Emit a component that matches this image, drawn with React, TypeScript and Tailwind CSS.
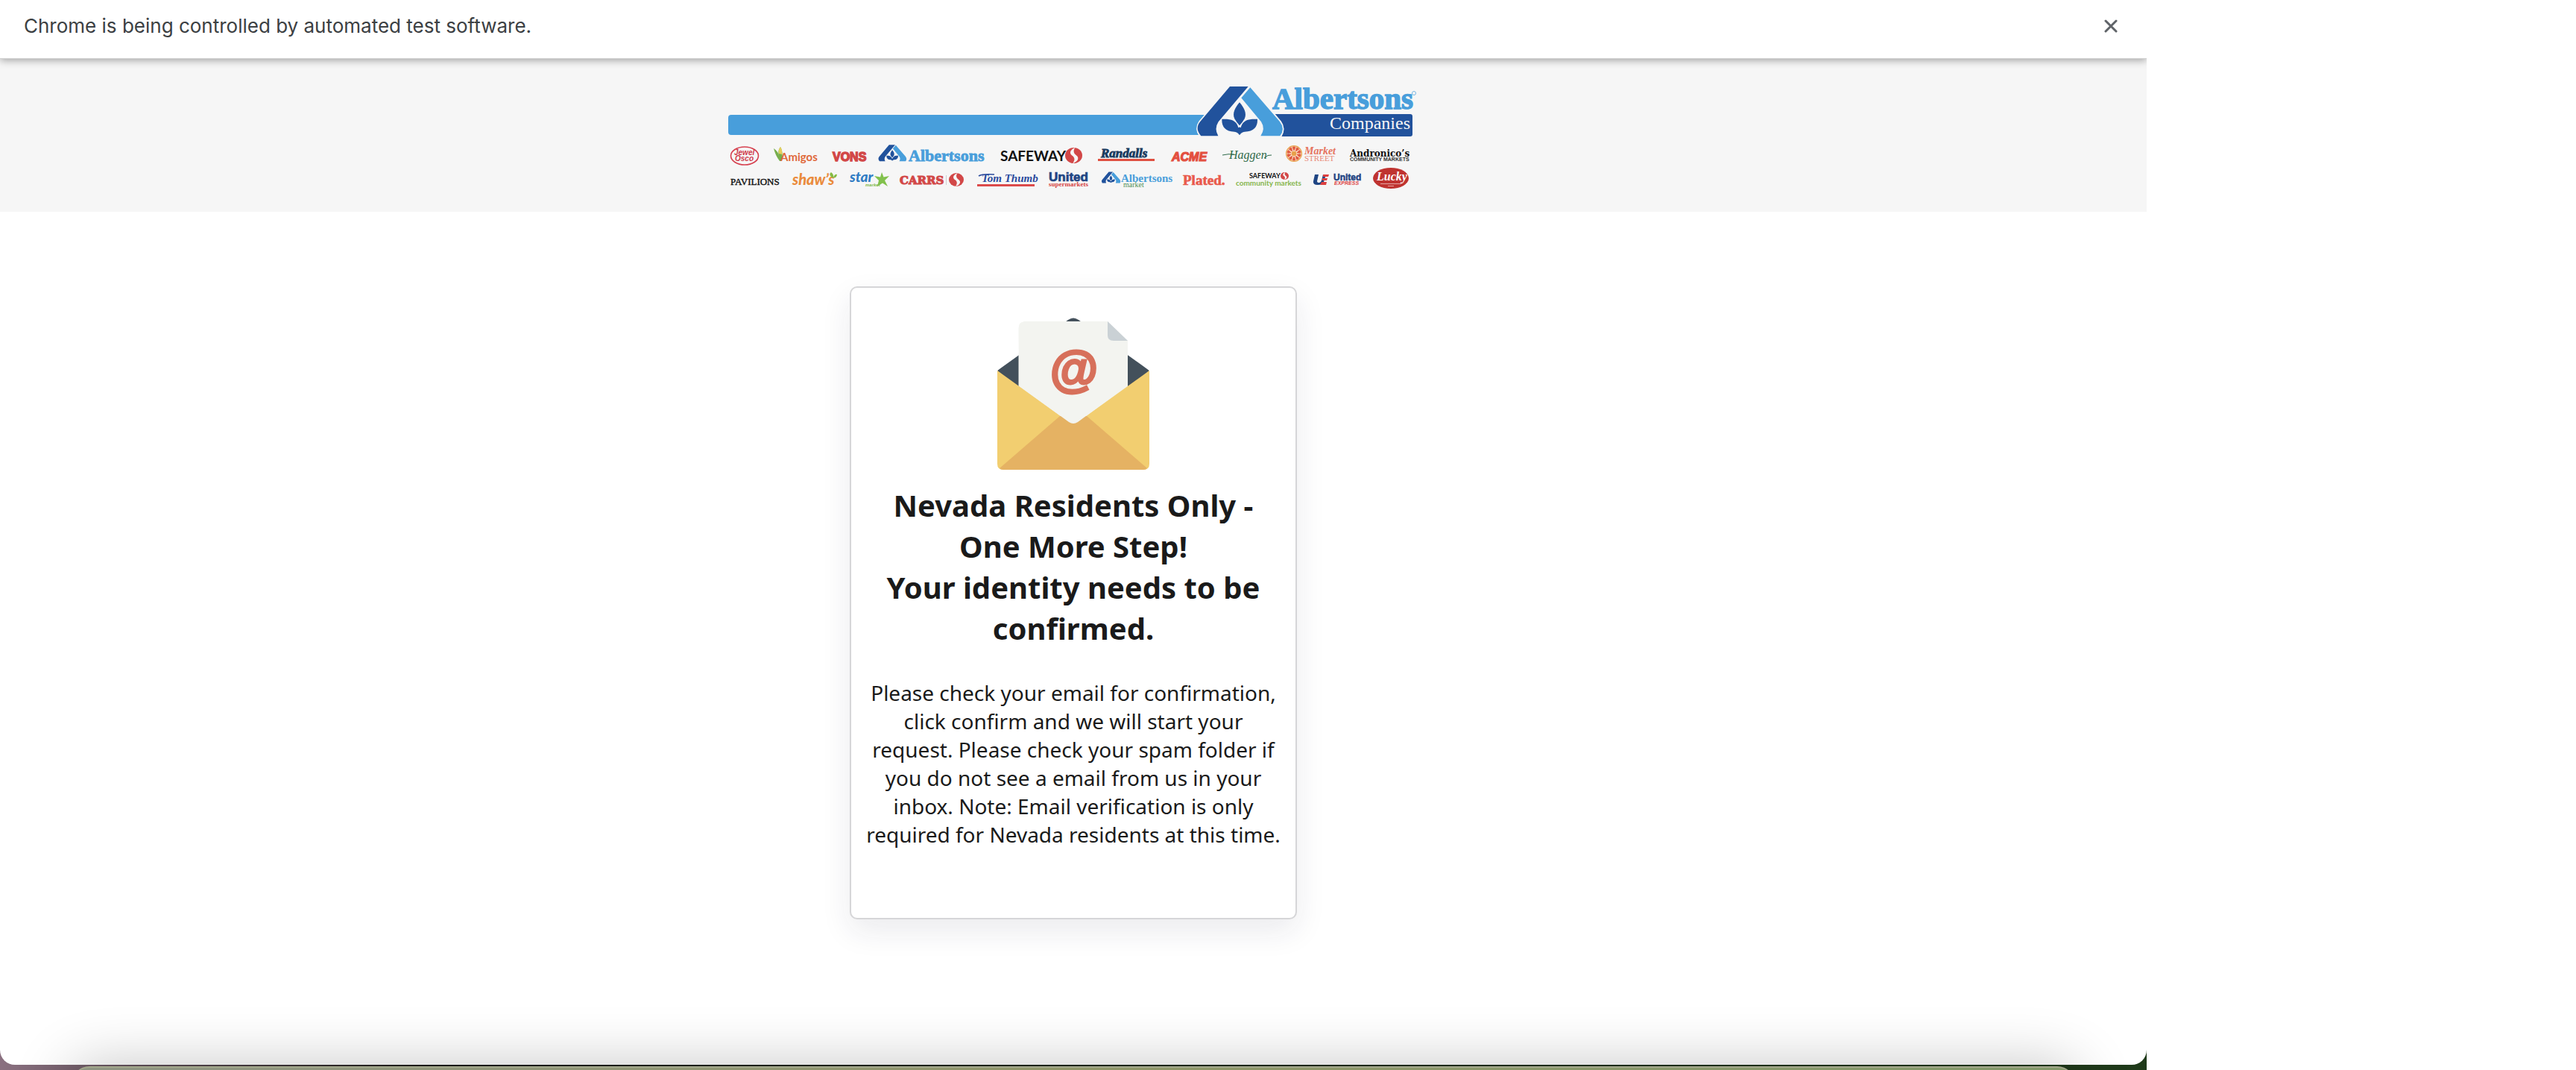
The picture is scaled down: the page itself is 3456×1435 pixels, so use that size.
import React from "react";

function LeafMark({ x, y, scale }: { x: number; y: number; scale: number }) {
  return (
    <g transform={`translate(${x} ${y}) scale(${scale})`}>
      <path d="M180 48H262L382 190Q402 218 384 247H62Q40 218 60 190Z" fill="#f6f6f6" stroke="#f6f6f6" strokeWidth="10" strokeLinejoin="round" />
      <path d="M180 48H254L134 190Q116 218 133 247H64Q38 218 60 190Z" fill="#21529c" />
      <path d="M262 52L380 188Q404 218 382 247H304Q324 218 306 190L226 94Z" fill="#489edb" />
      <path d="M219 112C202 132 188 156 199 178Q208 194 219 205Q230 194 239 178C250 156 236 132 219 112Z" fill="#21529c" />
      <path d="M148 179H168Q208 182 214 214Q219 209 224 214Q230 182 270 179H291Q293 228 240 230Q225 232 219 244Q213 232 198 230Q146 228 148 179Z" fill="#21529c" />
    </g>
  );
}

function SafewayS({ x, y, w, h }: { x: number; y: number; w: number; h: number }) {
  return (
    <svg x={x} y={y} width={w} height={h} viewBox="0 0 100 100" preserveAspectRatio="none">
      <ellipse cx="50" cy="50" rx="50" ry="50" fill="#d24747" />
      <path d="M58 0C30 12 22 36 40 50C58 62 58 82 44 100C72 92 86 66 66 50C48 36 46 18 58 0Z" fill="#f6f6f6" />
    </svg>
  );
}

const sans = "'Liberation Sans', Arial, sans-serif";
const serif = "'Liberation Serif', 'Times New Roman', serif";
const lato = "Lato, sans-serif";
const slab = "'DejaVu Serif', serif";

function BrandBanner() {
  const rays = [0, 36, 72, 108, 144, 180, 216, 252, 288, 324];
  return (
    <svg viewBox="976 112 928 144" className="w-[928px] max-w-full" role="img" aria-label="Albertsons Companies brands">
      <rect x="977" y="154" width="700" height="27" rx="4" fill="#489edb" />
      <rect x="1690" y="153" width="205" height="30" rx="3" fill="#21529c" />
      <LeafMark x={1590} y={100} scale={0.3333} />
      <text x="1707" y="146" fontFamily={serif} fontWeight="700" fontSize="41" fill="#489edb" stroke="#489edb" strokeWidth="1.4">Albertsons</text>
      <circle cx="1897" cy="125" r="2.5" fill="none" stroke="#489edb" strokeWidth="0.7" />
      <text x="1784" y="173" fontFamily={serif} fontSize="24" fill="#f6f6f6">Companies</text>

      <ellipse cx="999" cy="209" rx="18.5" ry="12" fill="none" stroke="#d6404f" strokeWidth="1.6" />
      <g fontFamily={sans} fontWeight="700" fontStyle="italic" fontSize="10" fill="#cf3a4a">
        <text x="985" y="208">Jewel</text>
        <text x="986" y="216">Osco</text>
      </g>

      <path d="M1046 216Q1040 208 1038 199Q1044 203 1045 209Q1043 202 1047 197Q1051 203 1049 216Z" fill="#78ae4c" />
      <path d="M1045 206Q1044 200 1047 197Q1050 201 1049 207Z" fill="#e6cf5c" />
      <text x="1047" y="216" fontFamily={lato} fontWeight="700" fontSize="15" fill="#e0683a">Amigos</text>
      <text x="1117" y="216" fontFamily={sans} fontWeight="700" fontSize="16" fill="#d24747" stroke="#d24747" strokeWidth="1.4">VONS</text>
      <LeafMark x={1173} y={189} scale={0.11} />
      <text x="1219" y="216" fontFamily={serif} fontWeight="700" fontSize="22" fill="#489edb" stroke="#489edb" strokeWidth="0.8">Albertsons</text>
      <text x="1342" y="216" fontFamily={lato} fontWeight="700" fontSize="19" fill="#111">SAFEWAY</text>
      <SafewayS x={1429} y={198} w={23} h={21} />
      <text x="1477" y="211" fontFamily={serif} fontWeight="700" fontStyle="italic" fontSize="17" fill="#183a5e" stroke="#183a5e" strokeWidth="0.8">Randalls</text>
      <rect x="1473" y="213" width="76" height="3" fill="#df4f40" />
      <text x="1572" y="216" fontFamily={sans} fontWeight="700" fontStyle="italic" fontSize="16" fill="#e34f3f" stroke="#e34f3f" strokeWidth="1.2">ACME</text>
      <text x="1649" y="213" fontFamily={serif} fontStyle="italic" fontSize="16" fill="#2f6a49">Haggen</text>
      <path d="M1640 208Q1648 206 1656 207M1696 212Q1701 207 1706 208" fill="none" stroke="#2f6a49" strokeWidth="1" />

      <circle cx="1736" cy="206" r="10.4" fill="#fbe6cc" stroke="#e8a04a" strokeWidth="1.2" />
      {rays.map((a) => (
        <path key={a} d="M1736 202L1734 197.500Q1736 196 1738 197.500Z" transform={`rotate(${a} 1736 206)`} fill="#e0593f" stroke="#e0593f" strokeWidth="0.8" />
      ))}
      <circle cx="1736" cy="206" r="3.2" fill="#e8a04a" />
      <text x="1750" y="207" fontFamily={serif} fontWeight="700" fontStyle="italic" fontSize="14" fill="#e5735f">Market</text>
      <text x="1750" y="216" fontFamily={serif} fontSize="11" fill="#e98a78">STREET</text>
      <text x="1811" y="210" fontFamily={slab} fontWeight="700" fontSize="12" fill="#111">Andronico’s</text>
      <text x="1811" y="216" fontFamily={sans} fontWeight="700" fontSize="7" fill="#333">COMMUNITY MARKETS</text>

      <text x="980" y="248" fontFamily={serif} fontSize="13" fill="#111" stroke="#111" strokeWidth="0.4">PAVILIONS</text>
      <text x="1063" y="248" fontFamily={lato} fontWeight="900" fontStyle="italic" fontSize="20" fill="#ea8b3d">shaw’s</text>
      <path d="M1116 238Q1111 234 1115 231Q1119 234 1118 238Q1120 233 1123 234Q1122 240 1116 238Z" fill="#86bb45" />
      <text x="1140" y="244" fontFamily={lato} fontWeight="900" fontStyle="italic" fontSize="19" fill="#2f7cc4">star</text>
      <path d="M1183 231L1185.500 237.500L1193 236L1187 242L1191 250L1184 245.500L1177 250L1179 242L1173 236L1181 237.500Z" fill="#82c14c" />
      <text x="1161" y="250" fontFamily={sans} fontWeight="700" fontStyle="italic" fontSize="6" fill="#82b94c">market</text>
      <text x="1207" y="247" fontFamily={slab} fontWeight="700" fontSize="15" fill="#d24747" stroke="#d24747" strokeWidth="1">CARRS</text>
      <rect x="1269" y="235" width="1" height="13" fill="#cfcfcf" />
      <SafewayS x={1273} y={232} w={20} h={18} />
      <text x="1317" y="244" fontFamily={serif} fontWeight="700" fontStyle="italic" fontSize="15" fill="#2a4a9d">Tom Thumb</text>
      <path d="M1313 236Q1318 233 1334 234" fill="none" stroke="#2a4a9d" strokeWidth="1.6" />
      <rect x="1311" y="247" width="77" height="3" fill="#dc4b4b" />
      <text x="1407" y="243" fontFamily={sans} fontWeight="700" fontSize="17" fill="#1f4583" stroke="#1f4583" strokeWidth="0.7">United</text>
      <text x="1407" y="250" fontFamily={serif} fontWeight="700" fontSize="9" fill="#d64545">supermarkets</text>
      <LeafMark x={1474} y={227} scale={0.075} />
      <text x="1504" y="244" fontFamily={serif} fontWeight="700" fontSize="15" fill="#489edb">Albertsons</text>
      <text x="1507" y="251" fontFamily={serif} fontSize="10" fill="#4f8f55">market</text>
      <text x="1587" y="248" fontFamily={serif} fontWeight="700" fontSize="19" fill="#e9594c" stroke="#e9594c" strokeWidth="0.6">Plated.</text>
      <text x="1676" y="239" fontFamily={lato} fontWeight="700" fontSize="9" fill="#111">SAFEWAY</text>
      <SafewayS x={1718} y={231} w={11} h={10} />
      <text x="1658" y="249" fontFamily={lato} fontWeight="700" fontSize="10" fill="#86b54d">community markets</text>
      <path d="M1764 234H1769L1767 243Q1767 245 1770 245Q1772 245 1773 242L1775 234H1779L1776 244Q1774 248 1768 248Q1761 248 1762 243Z" fill="#1f4583" />
      <path d="M1775 234H1783L1782 237H1775ZM1774 239H1781L1780 242H1774ZM1773 244H1780L1779 248H1771Z" fill="#dc4040" />
      <text x="1789" y="242" fontFamily={sans} fontWeight="700" fontSize="12" fill="#1f4583" stroke="#1f4583" strokeWidth="0.5">United</text>
      <text x="1790" y="248" fontFamily={sans} fontWeight="700" fontStyle="italic" fontSize="7" fill="#dc4040">EXPRESS</text>
      <ellipse cx="1866" cy="239" rx="24" ry="14" fill="#bf3330" />
      <text x="1847" y="242" fontFamily={serif} fontWeight="700" fontStyle="italic" fontSize="16" fill="#fff">Lucky</text>
      <path d="M1852 246.500H1880M1862 249.500H1870" stroke="#e3a5a2" strokeWidth="1.2" />
    </svg>
  );
}

function EnvelopeIcon() {
  return (
    <svg viewBox="0 0 204 204" className="h-[204px] w-[204px]" aria-hidden="true">
      <path d="M0 71L95 3Q102 -2 109 3L204 71L102 160Z" fill="#43505b" />
      <path d="M28.500 5V14Q28.500 6 36 5H148L175 31V120L102 171L28.500 120Z" fill="#f3f4f0" />
      <path d="M28 0H92V5H36Q28 6 28 14ZM112 0H180V31L148 5H112Z" fill="#fff" />
      <path d="M28 14L0 36V71L28.500 47ZM175 31L204 36V71L175 47Z" fill="#fff" />
      <path d="M148 5L175 31H156Q148 31 148 24Z" fill="#cad1d5" />
      <path d="M0 71L96 140Q102 144 108 140L204 71V196Q204 204 196 204H8Q0 204 0 196Z" fill="#f2ce70" />
      <path d="M3 202L84 132H120L201 202Q199 204 196 204H8Q5 204 3 202Z" fill="#e5b263" />
      <path d="M28.500 91L96 140Q102 144 108 140L175 91Z" fill="#f3f4f0" />
      <text x="102" y="92" textAnchor="middle" fontFamily={sans} fontStyle="italic" fontWeight="700" fontSize="66" fill="#d7705b" stroke="#d7705b" strokeWidth="3">@</text>
    </svg>
  );
}

export default function App() {
  return (
    <div className="min-h-screen bg-white">
      <div className="relative flex min-h-screen w-5/6 flex-col overflow-hidden bg-linear-to-r from-[#8a7080] via-[#1d1c18] via-20% to-[#1f3a1a] pb-[7px]">
        <div className="flex grow flex-col rounded-b-[20px] bg-white">
          <div className="z-10 flex h-[79px] items-center justify-between border-b border-[#cfcfcf] bg-white px-8 pb-2 shadow-[0_2px_10px_rgba(0,0,0,0.35)]">
            <p className="font-[Inter,sans-serif] text-[26px] leading-8 text-[#3c4043]">
              Chrome is being controlled by automated test software.
            </p>
            <button type="button" aria-label="Close" className="flex h-8 w-8 items-center justify-center">
              <svg viewBox="0 0 18 18" className="h-[18px] w-[18px]" fill="none" stroke="#5f6368" strokeWidth="3" strokeLinecap="round">
                <path d="M2 2L16 16M16 2L2 16" />
              </svg>
            </button>
          </div>
          <header className="flex justify-center bg-[#f6f6f6] pt-[33px] pb-7">
            <BrandBanner />
          </header>
          <main className="flex justify-center py-[100px]">
            <section className="flex w-[600px] flex-col items-center rounded-[10px] border-2 border-[#d6d6d8] bg-white px-5 pt-10 pb-[93px] text-center font-['Noto_Sans',sans-serif] text-[#1a1a1a] shadow-[0_16px_40px_rgba(30,30,70,0.09)]">
              <EnvelopeIcon />
              <h1 className="mt-5 text-[40px] leading-[55px] font-bold">
                Nevada Residents Only - One More Step!
                <br />
                Your identity needs to be confirmed.
              </h1>
              <p className="mt-10 text-[28px] leading-[38px]">
                Please check your email for confirmation, click confirm and we will start your request. Please check your spam folder if you do not see a email from us in your inbox. Note: Email verification is only required for Nevada residents at this time.
              </p>
            </section>
          </main>
        </div>
        <div className="absolute right-24 -bottom-[155px] left-24 h-40 rounded-[24px] border-t-2 border-[#a3a78c] bg-linear-to-r from-[#8f9583] via-[#8f9668] to-[#83996a] shadow-[0_0_80px_rgba(0,0,0,0.24)]" />
      </div>
    </div>
  );
}
